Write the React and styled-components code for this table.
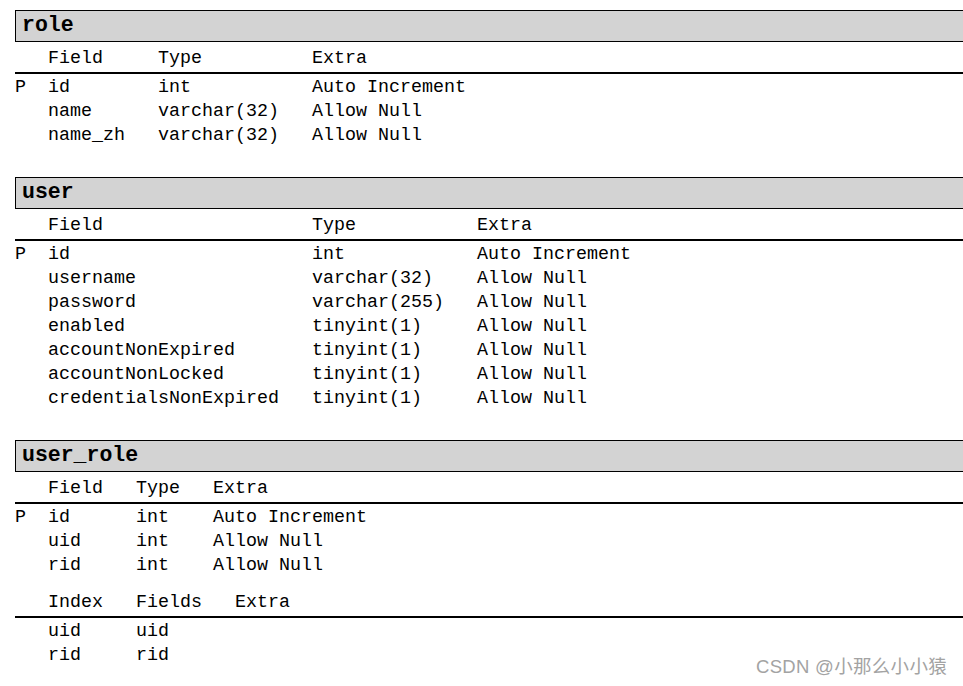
import React from 'react';
import styled, { createGlobalStyle } from 'styled-components';

const Global = createGlobalStyle`
  html, body { margin: 0; padding: 0; background: #fff; overflow: hidden; }
  body { width: 963px; height: 686px; }
`;

const Page = styled.div`
  position: relative;
  box-sizing: border-box;
  height: 686px;
  padding: 10px 0 0 15px;
  font-family: "Liberation Mono", "Courier New", monospace;
  font-size: 18.33px;
  color: #000;
  display: flex;
  flex-direction: column;
  gap: 31px;
`;

const Table = styled.section`
  display: flex;
  flex-direction: column;
`;

const Title = styled.div`
  box-sizing: border-box;
  height: 32px;
  border: 1px solid #000;
  border-right: none;
  background: #d3d3d3;
  font-weight: bold;
  font-size: 21.5px;
  line-height: 28px;
  padding-left: 6px;
  white-space: pre;
`;

const Row = styled.div`
  display: grid;
  grid-template-columns: 3ch ${(p) => p.$cols} 1fr;
  box-sizing: border-box;
  height: 24px;
  line-height: 27px;
  white-space: pre;
`;

const HeadRow = styled(Row)`
  height: 32px;
  line-height: 33px;
  border-bottom: 2px solid #000;
  margin-top: ${(p) => (p.$spaced ? '10px' : '0')};
`;

const Cell = styled.span`
  white-space: pre;
`;

const Watermark = styled.div`
  position: absolute;
  right: 16px;
  bottom: 9px;
  font-family: "Liberation Sans", "Noto Sans CJK SC", sans-serif;
  font-size: 18.5px;
  line-height: 20px;
  color: #a3a3a3;
  text-shadow: 0 0 1px rgba(255, 255, 255, 0.9), 1px 1px 0 rgba(255, 255, 255, 0.6);
  letter-spacing: 0.3px;
`;

const tables = [
  {
    name: 'role',
    cols: '10ch 14ch',
    head: ['Field', 'Type', 'Extra'],
    rows: [
      ['P', 'id', 'int', 'Auto Increment'],
      ['', 'name', 'varchar(32)', 'Allow Null'],
      ['', 'name_zh', 'varchar(32)', 'Allow Null'],
    ],
  },
  {
    name: 'user',
    cols: '24ch 15ch',
    head: ['Field', 'Type', 'Extra'],
    rows: [
      ['P', 'id', 'int', 'Auto Increment'],
      ['', 'username', 'varchar(32)', 'Allow Null'],
      ['', 'password', 'varchar(255)', 'Allow Null'],
      ['', 'enabled', 'tinyint(1)', 'Allow Null'],
      ['', 'accountNonExpired', 'tinyint(1)', 'Allow Null'],
      ['', 'accountNonLocked', 'tinyint(1)', 'Allow Null'],
      ['', 'credentialsNonExpired', 'tinyint(1)', 'Allow Null'],
    ],
  },
  {
    name: 'user_role',
    cols: '8ch 7ch',
    head: ['Field', 'Type', 'Extra'],
    rows: [
      ['P', 'id', 'int', 'Auto Increment'],
      ['', 'uid', 'int', 'Allow Null'],
      ['', 'rid', 'int', 'Allow Null'],
    ],
    index: {
      cols: '8ch 9ch',
      head: ['Index', 'Fields', 'Extra'],
      rows: [
        ['', 'uid', 'uid', ''],
        ['', 'rid', 'rid', ''],
      ],
    },
  },
];

function Block({ cols, head, rows, spaced }) {
  return (
    <>
      <HeadRow $cols={cols} $spaced={spaced}>
        <Cell />
        {head.map((h) => (
          <Cell key={h}>{h}</Cell>
        ))}
      </HeadRow>
      {rows.map((r, i) => (
        <Row key={i} $cols={cols}>
          {r.map((c, j) => (
            <Cell key={j}>{c}</Cell>
          ))}
        </Row>
      ))}
    </>
  );
}

export default function App() {
  return (
    <>
      <Global />
      <Page>
        {tables.map((t) => (
          <Table key={t.name}>
            <Title>{t.name}</Title>
            <Block cols={t.cols} head={t.head} rows={t.rows} />
            {t.index && <Block spaced cols={t.index.cols} head={t.index.head} rows={t.index.rows} />}
          </Table>
        ))}
        <Watermark>CSDN @小那么小小猿</Watermark>
      </Page>
    </>
  );
}
